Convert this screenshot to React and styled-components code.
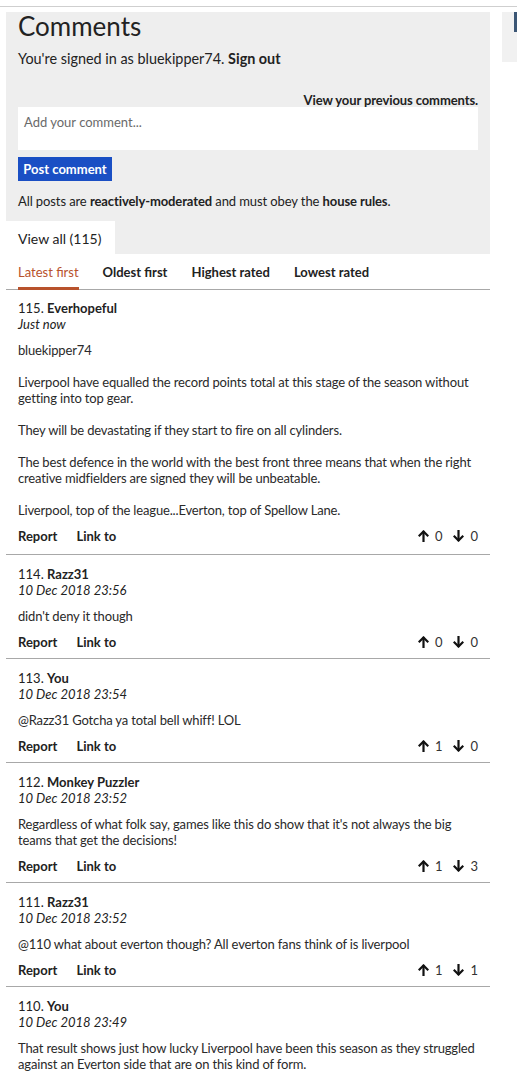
import React from "react";
import styled, { createGlobalStyle } from "styled-components";

const GlobalStyle = createGlobalStyle`
  body {
    margin: 0;
    background: #fff;
    font-family: Lato, "Liberation Sans", sans-serif;
    color: #222;
  }
`;

const TopRule = styled.div`
  height: 1px;
  margin-top: 6px;
  background: #cfcfcf;
`;

const Page = styled.div`
  display: flex;
  padding: 5px 0 0 6px;
`;

const Main = styled.div`
  width: 484px;
  flex-shrink: 0;
`;

const Side = styled.div`
  flex: 1;
  margin-left: 12px;
  height: 50px;
  background: #f1f1f1;
  display: flex;
  justify-content: flex-end;
`;

const SideBadge = styled.div`
  width: 3px;
  height: 20px;
  background: #3b5675;
`;

const Panel = styled.div`
  background: #eeeeee;
`;

const PanelInner = styled.div`
  padding: 0 12px;
`;

const Title = styled.h1`
  margin: 0;
  font-size: 26px;
  line-height: 28px;
  font-weight: 400;
  color: #222;
`;

const SignedIn = styled.p`
  margin: 10px 0 0;
  font-size: 14.4px;
  line-height: 18px;
  b {
    font-weight: 700;
  }
`;

const PrevLink = styled.div`
  margin-top: 24px;
  text-align: right;
  font-size: 13px;
  line-height: 16px;
  font-weight: 700;
  letter-spacing: -0.1px;
`;

const CommentInput = styled.div`
  margin-top: -1px;
  height: 43px;
  background: #fff;
  padding: 7px 6px;
  box-sizing: border-box;
  font-size: 13px;
  line-height: 16px;
  color: #6a6a6a;
`;

const PostButton = styled.button`
  display: block;
  margin-top: 7px;
  width: 94px;
  height: 24px;
  padding: 0;
  border: 0;
  background: #1a4fc4;
  color: #fff;
  font-family: inherit;
  font-size: 13px;
  font-weight: 700;
`;

const Rules = styled.p`
  margin: 12px 0 0;
  font-size: 13px;
  line-height: 16px;
  letter-spacing: -0.1px;
  b {
    font-weight: 700;
  }
`;

const TabRow = styled.div`
  margin-top: 12px;
  display: flex;
`;

const Tab = styled.div`
  width: 109px;
  height: 33px;
  background: #fff;
  box-sizing: border-box;
  padding: 9px 0 0 12px;
  font-size: 14px;
  line-height: 18px;
`;

const SortBar = styled.div`
  display: flex;
  gap: 24px;
  padding: 10px 12px 0;
  border-bottom: 1px solid #a8a8a8;
`;

const SortItem = styled.div`
  font-size: 13px;
  line-height: 16px;
  padding-bottom: 7px;
  font-weight: ${(p) => (p.active ? 400 : 700)};
  color: ${(p) => (p.active ? "#b8522c" : "#222")};
  border-bottom: 3px solid ${(p) => (p.active ? "#b8522c" : "transparent")};
  margin-bottom: -1px;
`;

const Comment = styled.div`
  padding: 11px 12px 8px;
  border-bottom: 1px solid #a8a8a8;
  font-size: 13px;
  line-height: 16px;
  &:first-of-type {
    padding-top: 10px;
    padding-bottom: 10px;
  }
`;

const Head = styled.div`
  b {
    font-weight: 700;
  }
`;

const Stamp = styled.div`
  font-style: italic;
`;

const Body = styled.div`
  margin-top: 10px;
  letter-spacing: -0.16px;
  color: #2a2a2a;
  p {
    margin: 0 0 16px;
  }
  p:last-child {
    margin-bottom: 0;
  }
`;

const Actions = styled.div`
  margin-top: 10px;
  display: flex;
  align-items: center;
`;

const ActionLink = styled.span`
  font-weight: 700;
  margin-right: 19px;
`;

const Votes = styled.div`
  margin-left: auto;
  display: flex;
  align-items: center;
`;

const Vote = styled.span`
  display: flex;
  align-items: center;
  gap: 6px;
  margin-left: 11px;
  color: #333;
`;

function Arrow({ down }) {
  return (
    <svg width="11" height="12" viewBox="0 0 11 12">
      <g
        fill="none"
        stroke="#111"
        strokeWidth="2.2"
        strokeLinecap="square"
        transform={down ? "rotate(180 5.5 6)" : undefined}
      >
        <path d="M5.5 11.5V2" />
        <path d="M1.5 5.5L5.5 1.5L9.5 5.5" />
      </g>
    </svg>
  );
}

const comments = [
  {
    n: 115,
    who: "Everhopeful",
    when: "Just now",
    body: [
      "bluekipper74",
      "Liverpool have equalled the record points total at this stage of the season without getting into top gear.",
      "They will be devastating if they start to fire on all cylinders.",
      "The best defence in the world with the best front three means that when the right creative midfielders are signed they will be unbeatable.",
      "Liverpool, top of the league...Everton, top of Spellow Lane.",
    ],
    up: 0,
    down: 0,
  },
  {
    n: 114,
    who: "Razz31",
    when: "10 Dec 2018 23:56",
    body: ["didn't deny it though"],
    up: 0,
    down: 0,
  },
  {
    n: 113,
    who: "You",
    when: "10 Dec 2018 23:54",
    body: ["@Razz31 Gotcha ya total bell whiff! LOL"],
    up: 1,
    down: 0,
  },
  {
    n: 112,
    who: "Monkey Puzzler",
    when: "10 Dec 2018 23:52",
    body: [
      "Regardless of what folk say, games like this do show that it's not always the big teams that get the decisions!",
    ],
    up: 1,
    down: 3,
  },
  {
    n: 111,
    who: "Razz31",
    when: "10 Dec 2018 23:52",
    body: ["@110 what about everton though? All everton fans think of is liverpool"],
    up: 1,
    down: 1,
  },
  {
    n: 110,
    who: "You",
    when: "10 Dec 2018 23:49",
    body: [
      "That result shows just how lucky Liverpool have been this season as they struggled against an Everton side that are on this kind of form.",
    ],
    up: null,
  },
];

export default function App() {
  return (
    <>
      <GlobalStyle />
      <TopRule />
      <Page>
        <Main>
          <Panel>
            <PanelInner>
              <Title>Comments</Title>
              <SignedIn>
                You're signed in as bluekipper74. <b>Sign out</b>
              </SignedIn>
              <PrevLink>View your previous comments.</PrevLink>
              <CommentInput>Add your comment...</CommentInput>
              <PostButton>Post comment</PostButton>
              <Rules>
                All posts are <b>reactively-moderated</b> and must obey the{" "}
                <b>house rules</b>.
              </Rules>
            </PanelInner>
            <TabRow>
              <Tab>View all (115)</Tab>
            </TabRow>
          </Panel>
          <SortBar>
            <SortItem active>Latest first</SortItem>
            <SortItem>Oldest first</SortItem>
            <SortItem>Highest rated</SortItem>
            <SortItem>Lowest rated</SortItem>
          </SortBar>
          <div>
            {comments.map((c) => (
              <Comment key={c.n}>
                <Head>
                  {c.n}. <b>{c.who}</b>
                </Head>
                <Stamp>{c.when}</Stamp>
                <Body>
                  {c.body.map((t, i) => (
                    <p key={i}>{t}</p>
                  ))}
                </Body>
                {c.up !== null && (
                  <Actions>
                    <ActionLink>Report</ActionLink>
                    <ActionLink>Link to</ActionLink>
                    <Votes>
                      <Vote>
                        <Arrow />
                        {c.up}
                      </Vote>
                      <Vote>
                        <Arrow down />
                        {c.down}
                      </Vote>
                    </Votes>
                  </Actions>
                )}
              </Comment>
            ))}
          </div>
        </Main>
        <Side>
          <SideBadge />
        </Side>
      </Page>
    </>
  );
}
